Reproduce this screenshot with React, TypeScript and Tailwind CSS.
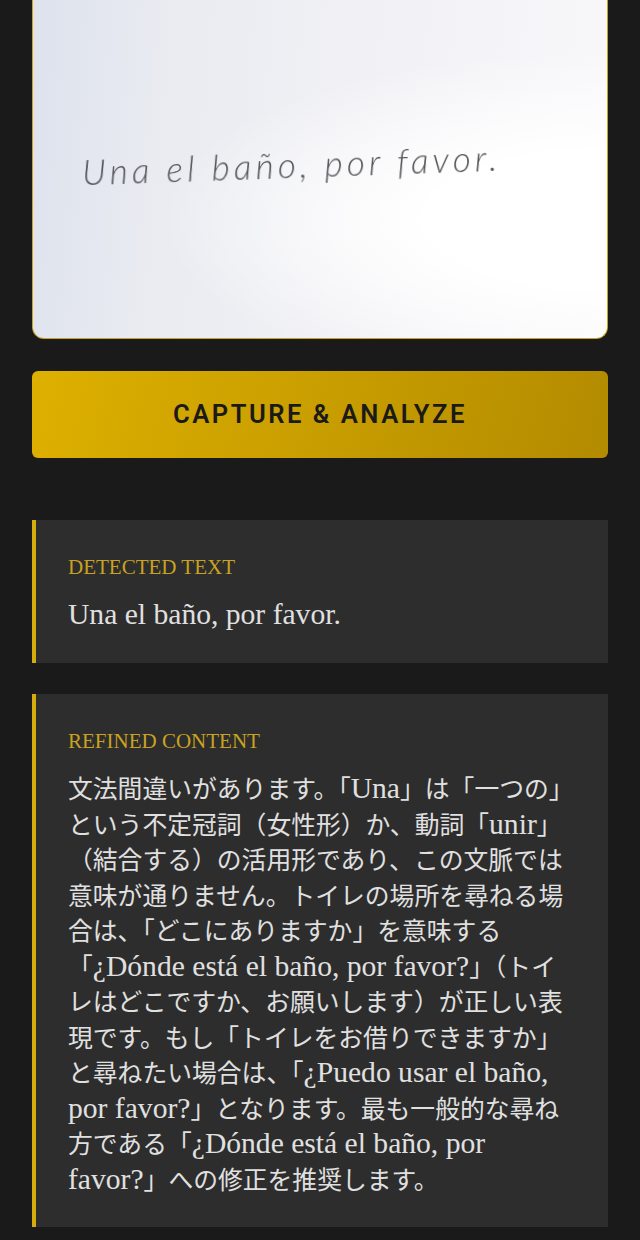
import React from 'react';

const serif = "font-['Liberation_Serif','Noto_Sans_CJK_JP',serif]";

// the Latin runs sit in a bigger size so they keep the width of the original serif
const Latin: React.FC<{ children: React.ReactNode }> = ({ children }) => (
    <span className="text-[29.6px] leading-none">{children}</span>
);

const ResultCard: React.FC<{ label: string; children: React.ReactNode }> = ({ label, children }) => (
    <section className={`border-l-4 border-[#d4ac0d] bg-[#2d2d2d] px-8 pt-[30.5px] pb-[29px] ${serif}`}>
        <h3 className="text-[21px] leading-[32px] font-normal text-[#c9a21f] mb-[15.5px]">{label}</h3>
        <p className="text-[24.8px] leading-[35.5px] text-[#e0e0e0]">{children}</p>
    </section>
);

const App: React.FC = () => {
    return (
        <div className="w-[640px] h-[1240px] overflow-hidden bg-[#1a1a1a] px-8">
            <div className="relative h-[339px] rounded-b-[12px] border border-t-0 border-[#c9a21f] bg-[radial-gradient(ellipse_at_100%_65%,#ffffff_0%,#ffffff_22%,rgba(255,255,255,0)_55%),linear-gradient(95deg,#dde2ed_0%,#e9ebf1_22%,#f1f1f5_55%,#f8f7fa_100%)]">
                <p className="absolute left-[49px] top-[144px] -rotate-[2deg] font-['Lato',sans-serif] text-[35px] leading-[40px] font-light italic tracking-[4.2px] whitespace-nowrap text-[#55575b] blur-[0.4px]">
                    Una el baño, por favor.
                </p>
            </div>

            <button className="mt-[32px] flex h-[87px] w-full items-center justify-center rounded-[6px] bg-[linear-gradient(105deg,#deb000_0%,#b38b00_100%)] font-['Roboto',sans-serif] text-[25.6px] font-semibold tracking-[2.5px] text-[#1a1a1a]">
                CAPTURE &amp; ANALYZE
            </button>

            <div className="mt-[62px] flex flex-col gap-[31.5px]">
                <ResultCard label="DETECTED TEXT"><Latin>Una el baño, por favor.</Latin></ResultCard>
                <ResultCard label="REFINED CONTENT">
                    文法間違いがあります。「<Latin>Una</Latin>」は「一つの」という不定冠詞（女性形）か、動詞「<Latin>unir</Latin>」（結合する）の活用形であり、この文脈では意味が通りません。トイレの場所を尋ねる場合は、「どこにありますか」を意味する「<Latin>¿Dónde está el baño, por favor?</Latin>」（トイレはどこですか、お願いします）が正しい表現です。もし「トイレをお借りできますか」と尋ねたい場合は、「<Latin>¿Puedo usar el baño, por favor?</Latin>」となります。最も一般的な尋ね方である「<Latin>¿Dónde está el baño, por favor?</Latin>」への修正を推奨します。
                </ResultCard>
            </div>
        </div>
    );
};

export default App;
